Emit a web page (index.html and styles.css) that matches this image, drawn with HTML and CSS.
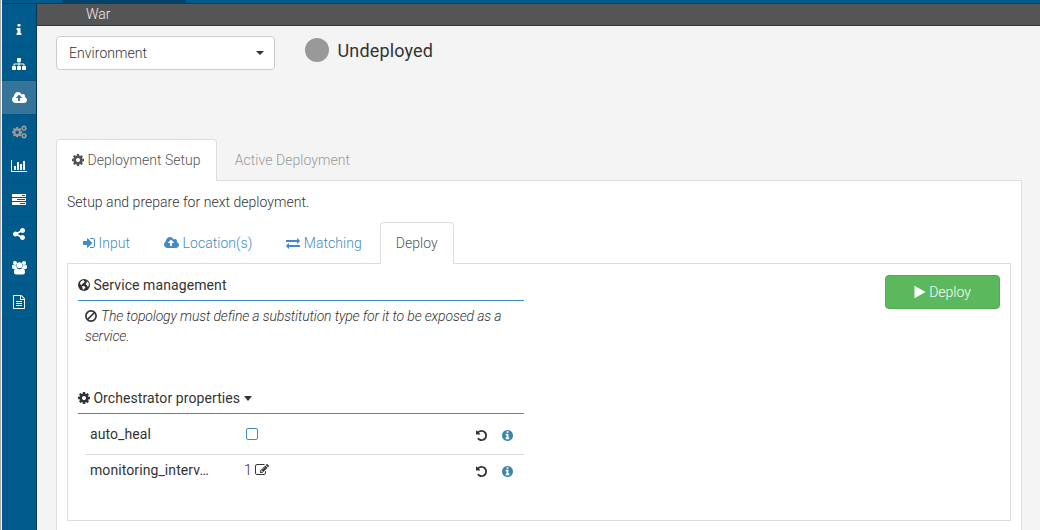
FILE: index.html
```
<!DOCTYPE html>
<html lang="en">
<head>
<meta charset="utf-8">
<title>War - Deployment</title>
<link rel="stylesheet" href="styles.css">
</head>
<body>
<svg class="sprite" aria-hidden="true">
  <symbol id="cog" viewBox="128 0 1536 1792"><path d="M1152 896q0-106-75-181t-181-75-181 75-75 181 75 181 181 75 181-75 75-181zm512-109v222q0 12-8 23t-20 13l-185 28q-19 54-39 91 35 50 107 138 10 12 10 25t-9 23q-27 37-99 108t-94 71q-12 0-26-9l-138-108q-44 23-91 38-16 136-29 186-7 28-36 28h-222q-14 0-24.500-8.500t-11.500-21.500l-28-184q-49-16-90-37l-141 107q-10 9-25 9-14 0-25-11-126-114-165-168-7-10-7-23 0-12 8-23 15-21 51-66.500t54-70.500q-27-50-41-99l-183-27q-13-2-21-12.500t-8-23.500v-222q0-12 8-23t19-13l186-28q14-46 39-92-40-57-107-138-10-12-10-24 0-10 9-23 26-36 98.500-107.500t94.500-71.500q13 0 26 10l138 107q44-23 91-38 16-136 29-186 7-28 36-28h222q14 0 24.500 8.500t11.500 21.500l28 184q49 16 90 37l142-107q9-9 24-9 13 0 25 10 129 119 165 170 7 8 7 22 0 12-8 23-15 21-51 66.500t-54 70.500q26 50 41 98l183 28q13 2 21 12.500t8 23.500z"/></symbol>
  <symbol id="cloud" viewBox="-64 0 1920 1792"><path d="M1216 864q0-14-9-23l-352-352q-9-9-23-9t-23 9l-351 351q-10 12-10 24 0 14 9 23t23 9h224v352q0 13 9.500 22.500t22.500 9.500h192q13 0 22.500-9.500t9.500-22.500v-352h224q13 0 22.500-9.500t9.500-22.500zm640 288q0 159-112.500 271.500t-271.500 112.500h-1088q-185 0-316.500-131.500t-131.500-316.500q0-130 70-240t188-165q-2-30-2-43 0-212 150-362t362-150q156 0 285.500 87t188.500 231q71-62 166-62 106 0 181 75t75 181q0 76-41 138 130 31 213.500 135.500t83.500 238.500z"/></symbol>
  <symbol id="undo" viewBox="128 0 1536 1792"><path d="M1664 896q0 156-61 298t-164 245-245 164-298 61q-172 0-327-72.500t-264-204.500q-7-10-6.500-22.500t8.500-20.500l137-138q10-9 25-9 16 2 23 12 73 95 179 147t225 52q104 0 198.500-40.500t163.500-109.500 109.500-163.500 40.500-198.500-40.500-198.500-109.500-163.500-163.500-109.500-198.500-40.500q-98 0-188 35.500t-160 101.500l137 138q31 30 14 69-17 40-59 40h-448q-26 0-45-19t-19-45v-448q0-42 40-59 39-17 69 14l130 129q107-101 244.500-156.500t284.500-55.500q156 0 298 61t245 164 164 245 61 298z"/></symbol>
  <symbol id="info-circle" viewBox="128 0 1536 1792"><path d="M1152 1376v-160q0-14-9-23t-23-9h-96v-512q0-14-9-23t-23-9h-320q-14 0-23 9t-9 23v160q0 14 9 23t23 9h96v320h-96q-14 0-23 9t-9 23v160q0 14 9 23t23 9h448q14 0 23-9t9-23zm-128-896v-160q0-14-9-23t-23-9h-192q-14 0-23 9t-9 23v160q0 14 9 23t23 9h192q14 0 23-9t9-23zm640 416q0 209-103 385.500t-279.500 279.500-385.500 103-385.500-103-279.500-279.500-103-385.500 103-385.500 279.500-279.500 385.500-103 385.500 103 279.500 279.500 103 385.500z"/></symbol>
</svg>

<div class="app">
  <div class="brandbar"><div class="brandbar-item"></div></div>
  <div class="shell">
    <nav class="sidebar">
      <a class="side-item"><svg class="icon w14" viewBox="0 0 1792 1792"><path d="M1216 1344v128q0 26-19 45t-45 19h-512q-26 0-45-19t-19-45v-128q0-26 19-45t45-19h64v-384h-64q-26 0-45-19t-19-45v-128q0-26 19-45t45-19h384q26 0 45 19t19 45v576h64q26 0 45 19t19 45zm-128-1152v192q0 26-19 45t-45 19h-256q-26 0-45-19t-19-45v-192q0-26 19-45t45-19h256q26 0 45 19t19 45z"/></svg></a>
      <a class="side-item"><svg class="icon w14" viewBox="0 0 1792 1792"><path d="M1792 1248v320q0 40-28 68t-68 28h-320q-40 0-68-28t-28-68v-320q0-40 28-68t68-28h96v-192h-512v192h96q40 0 68 28t28 68v320q0 40-28 68t-68 28h-320q-40 0-68-28t-28-68v-320q0-40 28-68t68-28h96v-192h-512v192h96q40 0 68 28t28 68v320q0 40-28 68t-68 28h-320q-40 0-68-28t-28-68v-320q0-40 28-68t68-28h96v-192q0-52 38-90t90-38h512v-192h-96q-40 0-68-28t-28-68v-320q0-40 28-68t68-28h320q40 0 68 28t28 68v320q0 40-28 68t-68 28h-96v192h512q52 0 90 38t38 90v192h96q40 0 68 28t28 68z"/></svg></a>
      <a class="side-item active"><svg class="icon w15"><use href="#cloud"/></svg></a>
      <a class="side-item disabled"><svg class="icon w15" viewBox="0 0 15 14"><use href="#cog" x="0" y="1.200" width="10.300" height="12"/><use href="#cog" x="9" y="-0.300" width="6" height="7"/><use href="#cog" x="9" y="7.300" width="6" height="7"/></svg></a>
      <a class="side-item"><svg class="icon w16" viewBox="0 0 2048 1792"><path d="M640 896v512h-256v-512h256zm384-512v1024h-256v-1024h256zm1024 1152v128h-2048v-1536h128v1408h1920zm-640-896v768h-256v-768h256zm384-384v1152h-256v-1152h256z"/></svg></a>
      <a class="side-item"><svg class="icon w14" viewBox="0 0 1792 1792"><path d="M1024 1408h640v-128h-640v128zm-384-512h1024v-128h-1024v128zm640-512h384v-128h-384v128zm512 832v256q0 26-19 45t-45 19h-1664q-26 0-45-19t-19-45v-256q0-26 19-45t45-19h1664q26 0 45 19t19 45zm0-512v256q0 26-19 45t-45 19h-1664q-26 0-45-19t-19-45v-256q0-26 19-45t45-19h1664q26 0 45 19t19 45zm0-512v256q0 26-19 45t-45 19h-1664q-26 0-45-19t-19-45v-256q0-26 19-45t45-19h1664q26 0 45 19t19 45z"/></svg></a>
      <a class="side-item"><svg class="icon w12" viewBox="128 0 1536 1792"><path d="M1344 1024q133 0 226.500 93.500t93.500 226.500-93.500 226.500-226.500 93.500-226.500-93.500-93.500-226.500q0-12 2-34l-360-180q-92 86-218 86-133 0-226.500-93.500t-93.500-226.500 93.500-226.500 226.500-93.500q126 0 218 86l360-180q-2-22-2-34 0-133 93.500-226.500t226.500-93.500 226.500 93.500 93.500 226.500-93.500 226.500-226.500 93.500q-126 0-218-86l-360 180q2 22 2 34t-2 34l360 180q92-86 218-86z"/></svg></a>
      <a class="side-item"><svg class="icon w15" viewBox="0 0 15 14"><circle cx="3" cy="2.100" r="2"/><circle cx="12" cy="2.100" r="2"/><circle cx="7.500" cy="4.200" r="2.900"/><path d="M0 6.200C0 4.400.6 3.700 1.300 3.800c1 .7 2 .7 2.900.2.200 1.500.4 2 1 2.800-1 0-1.700.4-2.200 1.100H1.400C.5 7.900 0 7.300 0 6.200zM15 6.200c0-1.800-.6-2.500-1.300-2.400-1 .7-2 .7-2.900.2-.2 1.500-.4 2-1 2.800 1 0 1.700.4 2.200 1.100h1.600c.9 0 1.400-.6 1.400-1.700zM4.500 7.100c1.800 1.500 4.200 1.500 6 0 1.700 0 2.500 1.800 2.500 4.200 0 1.300-.8 2.100-2 2.100H4c-1.200 0-2-.8-2-2.100 0-2.400.8-4.200 2.500-4.200z"/></svg></a>
      <a class="side-item"><svg class="icon w12" viewBox="128 0 1536 1792"><path d="M1596 380q28 28 48 76t20 88v1152q0 40-28 68t-68 28h-1344q-40 0-68-28t-28-68v-1600q0-40 28-68t68-28h896q40 0 88 20t76 48zm-444-244v376h376q-10-29-22-41l-313-313q-12-12-41-22zm384 1528v-1024h-416q-40 0-68-28t-28-68v-416h-768v1536h1280zm-1024-864q0-14 9-23t23-9h704q14 0 23 9t9 23v64q0 14-9 23t-23 9h-704q-14 0-23-9t-9-23v-64zm736 224q14 0 23 9t9 23v64q0 14-9 23t-23 9h-704q-14 0-23-9t-9-23v-64q0-14 9-23t23-9h704zm0 256q14 0 23 9t9 23v64q0 14-9 23t-23 9h-704q-14 0-23-9t-9-23v-64q0-14 9-23t23-9h704z"/></svg></a>
    </nav>
    <div class="main">
      <header class="titlebar">War</header>
      <div class="content">
        <div class="status-row">
          <button class="select"><span>Environment</span><i class="caret"></i></button>
          <i class="dot"></i><span class="status">Undeployed</span>
        </div>
        <div class="tabs outer-tabs">
          <a class="tab active"><svg class="icon w12"><use href="#cog"/></svg>Deployment Setup</a>
          <a class="tab muted">Active Deployment</a>
        </div>
        <section class="outer-panel">
          <p class="intro">Setup and prepare for next deployment.</p>
          <div class="tabs inner-tabs">
            <a class="tab"><svg class="icon w12" viewBox="128 0 1536 1792"><path d="M1312 896q0 26-19 45l-544 544q-19 19-45 19t-45-19-19-45v-288h-448q-26 0-45-19t-19-45v-384q0-26 19-45t45-19h448v-288q0-26 19-45t45-19 45 19l544 544q19 19 19 45zm352-352v704q0 119-84.500 203.500t-203.500 84.500h-320q-13 0-22.500-9.500t-9.500-22.500q0-4-1-20t-.5-26.500 3-23.500 10-19.500 20.500-6.500h320q66 0 113-47t47-113v-704q0-66-47-113t-113-47h-312l-11.500-1-11.500-3-8-5.500-7-9-2-13.500q0-4-1-20t-.5-26.500 3-23.500 10-19.500 20.500-6.500h320q119 0 203.500 84.500t84.500 203.500z"/></svg>Input</a>
            <a class="tab"><svg class="icon w15"><use href="#cloud"/></svg>Location(s)</a>
            <a class="tab"><svg class="icon w14" viewBox="0 0 1792 1792"><path d="M1792 1184v192q0 13-9.500 22.500t-22.500 9.500h-1376v192q0 13-9.500 22.500t-22.500 9.500q-12 0-24-10l-319-320q-9-9-9-22 0-14 9-23l320-320q9-9 23-9 13 0 22.500 9.500t9.500 22.500v192h1376q13 0 22.500 9.500t9.500 22.500zm0-544q0 14-9 23l-320 320q-9 9-23 9-13 0-22.500-9.500t-9.500-22.500v-192h-1376q-13 0-22.500-9.500t-9.500-22.500v-192q0-13 9.500-22.500t22.500-9.500h1376v-192q0-14 9-23t23-9q12 0 24 10l319 319q9 9 9 23z"/></svg>Matching</a>
            <a class="tab active">Deploy</a>
          </div>
          <div class="inner-panel">
            <div class="settings">
              <h4 class="heading"><svg class="icon w12" viewBox="0 0 12 14"><circle cx="6" cy="7" r="6"/><path class="land" d="M3.200 3.300l1.600-1.100 1.400.2-.3.800 1 .3-.8 1.100-1.200.6-.5 1-1.100.3.700.8-1.100-.3-.8-1.300.2-1.500zM4.800 8l1.500.2 1.100.8-.5 1.300-1 .8-.6 1-.7-.8-.1-1.500-.6-1zM8.600 3.600l1.400.3.800 1.600.1 1.500-.8 1.700-.7-.2-.4-1.300-1-.4-.2-1 .8-.9z"/></svg>Service management</h4>
              <p class="notice"><svg class="icon w12" viewBox="0 0 12 14"><g fill="none" stroke="currentColor" stroke-width="1.700"><circle cx="6" cy="7" r="5.100"/><path d="M2.500 10.500l7-7"/></g></svg>The topology must define a substitution type for it to be exposed as a service.</p>
              <h4 class="heading second"><svg class="icon w12"><use href="#cog"/></svg>Orchestrator properties<i class="caret"></i></h4>
              <div class="properties">
                <div class="property"><span class="name">auto_heal</span><span class="value"><i class="checkbox"></i></span><svg class="icon action"><use href="#undo"/></svg><svg class="icon action help"><use href="#info-circle"/></svg></div>
                <div class="property"><span class="name">monitoring_interv…</span><span class="value">1<svg class="icon w14" viewBox="0 0 1792 1792"><path d="M888 1184l116-116-152-152-116 116v56h96v96h56zm440-720q-16-16-33 1l-350 350q-17 17-1 33t33-1l350-350q17-17 1-33zm80 594v190q0 119-84.500 203.500t-203.500 84.500h-832q-119 0-203.500-84.500t-84.500-203.500v-832q0-119 84.500-203.500t203.500-84.500h832q63 0 117 25 15 7 18 23 3 17-9 29l-49 49q-14 14-32 8-23-6-45-6h-832q-66 0-113 47t-47 113v832q0 66 47 113t113 47h832q66 0 113-47t47-113v-126q0-13 9-22l64-64q15-15 35-7t20 29zm-96-738l288 288-672 672h-288v-288zm444 132l-92 92-288-288 92-92q28-28 68-28t68 28l152 152q28 28 28 68t-28 68z"/></svg></span><svg class="icon action"><use href="#undo"/></svg><svg class="icon action help"><use href="#info-circle"/></svg></div>
              </div>
            </div>
            <button class="deploy"><svg class="icon play" viewBox="0 0 11 14"><path d="M0 .8v12.400L11 7z"/></svg>Deploy</button>
          </div>
        </section>
      </div>
    </div>
  </div>
</div>
</body>
</html>
```

FILE: styles.css
```
* { box-sizing: border-box; }
body {
  margin: 0;
  height: 530px;
  overflow: hidden;
  background: #f4f4f4;
  color: #333;
  font: 300 14px/20px Roboto, "Liberation Sans", sans-serif;
}
.sprite { display: none; }
.icon { height: 14px; flex: none; fill: currentColor; }
.w12 { width: 12px; }
.w14 { width: 14px; }
.w15 { width: 15px; }
.w16 { width: 16px; }
.app {
  height: 530px;
  border-left: 1px solid #aaa;
  padding-left: 1px;
  display: flex;
  flex-direction: column;
}
.brandbar {
  flex: none;
  height: 4px;
  padding-left: 60px;
  background: #005a8b;
  border-bottom: 1px solid #00406a;
}
.brandbar-item { width: 124px; height: 3px; background: #00446b; }
.shell { flex: 1; display: flex; min-height: 0; }
.sidebar {
  width: 35px;
  flex: none;
  padding-top: 9px;
  background: #005a8b;
  border-right: 1px solid #003653;
}
.side-item {
  height: 34px;
  display: flex;
  align-items: center;
  justify-content: center;
  color: #fff;
  border-bottom: 1px solid #005583;
}
.side-item.active { background: #367599; }
.side-item.disabled { color: #999; }
.main { flex: 1; min-width: 0; }
.titlebar {
  height: 22px;
  padding-left: 49px;
  background: #555;
  border-bottom: 1px solid #333;
  color: #eee;
}
.content { padding: 10px 18px 0 19px; }
.status-row { display: flex; height: 103px; align-items: flex-start; }
.select {
  width: 219px;
  height: 34px;
  padding: 0 10px 0 12px;
  display: flex;
  align-items: center;
  justify-content: space-between;
  border: 1px solid #ccc;
  border-radius: 4px;
  background: #fff;
  color: #333;
  font: inherit;
  letter-spacing: .06px;
}
.caret {
  width: 0;
  height: 0;
  border: 4px solid transparent;
  border-top-color: #333;
  border-bottom: 0;
}
.dot {
  width: 24px;
  height: 24px;
  margin: 2px 8.5px 0 30px;
  border-radius: 50%;
  background: #999;
}
.status { font-size: 18px; font-weight: 400; line-height: 29px; letter-spacing: .15px; }
.tabs { display: flex; }
.tab {
  height: 42px;
  padding: 0 15px 2px;
  display: flex;
  align-items: center;
  gap: 3.5px;
  border: 1px solid transparent;
  border-bottom: 0;
  border-radius: 4px 4px 0 0;
  margin-right: 2px;
  color: #428bca;
  letter-spacing: .04px;
}
.tab.active { position: relative; background: #fff; border-color: #ddd; color: #555; }
.tab.muted { color: #999; letter-spacing: .05px; }
.outer-panel {
  height: 360px;
  margin-top: -1px;
  padding: 11px 10px 0;
  background: #fff;
  border: 1px solid #ddd;
}
.intro { margin: 0 0 10px; letter-spacing: .03px; }
.inner-panel {
  height: 258px;
  margin-top: -1px;
  padding: 11px 10px;
  display: flex;
  justify-content: space-between;
  align-items: flex-start;
  border: 1px solid #ddd;
}
.settings { width: 446px; }
.heading {
  height: 26px;
  margin: 0;
  display: flex;
  align-items: flex-start;
  gap: 3.4px;
  border-bottom: 1px solid #428bca;
  font-size: 14px;
  font-weight: 400;
  letter-spacing: .09px;
}
.heading .icon { margin-top: 3px; }
.heading .caret { margin-top: 8px; border-width: 5px 4.5px 0; }
.land { fill: #fff; }
.notice {
  height: 87px;
  margin: 0;
  padding: 5px 7px 0;
  font-style: italic;
  letter-spacing: -.15px;
}
.notice .icon { margin-right: 4px; vertical-align: -2px; }
.properties { margin-left: 7px; }
.property { height: 40px; padding-left: 5px; display: flex; align-items: center; }
.property + .property { height: 31px; border-top: 1px solid #ddd; }
.name {
  width: 120px;
  margin-right: 34px;
  white-space: nowrap;
  font-weight: 400;
  letter-spacing: .09px;
}
.value { width: 232px; display: flex; align-items: center; gap: 3.5px; }
.checkbox { width: 12px; height: 12px; margin-left: 2px; border: 1px solid #428bca; border-radius: 2px; }
.action { width: 11px; height: 13px; margin: 3px 15px 0 0; }
.action.help { margin-right: 0; color: #3a87ad; }
.deploy {
  width: 115px;
  height: 34px;
  padding: 0;
  display: flex;
  align-items: center;
  justify-content: center;
  gap: 3px;
  border: 1px solid #4cae4c;
  border-radius: 4px;
  background: #5cb85c;
  color: #fff;
  font: inherit;
}
.play { width: 12px; }
```
